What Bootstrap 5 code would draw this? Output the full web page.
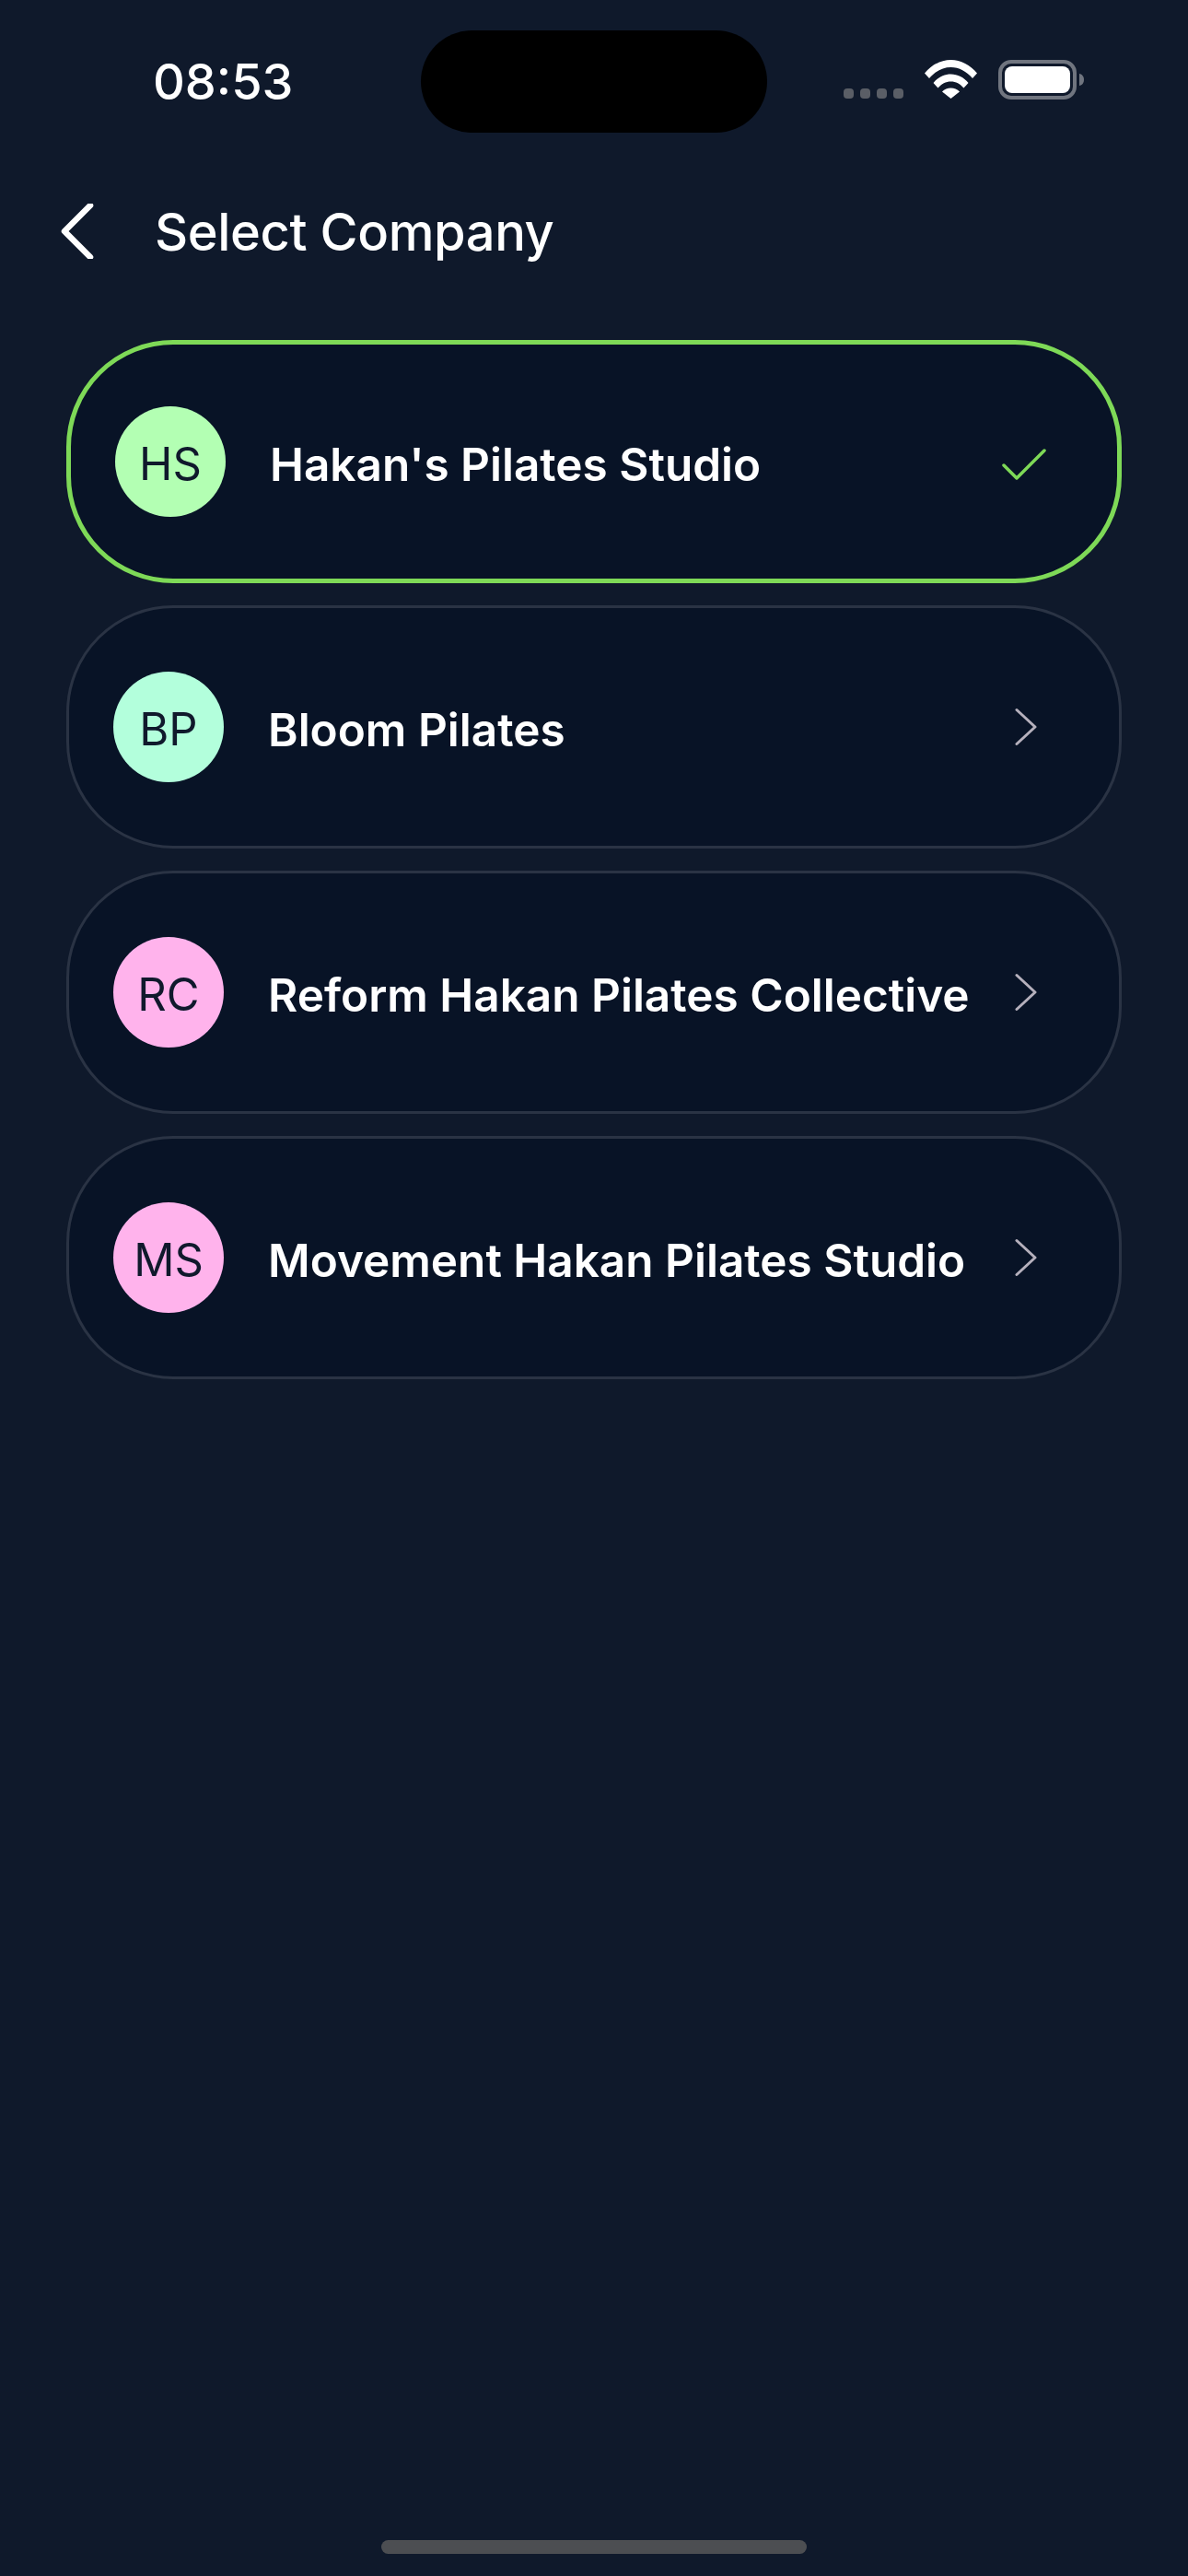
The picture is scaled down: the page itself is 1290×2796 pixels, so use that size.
<!DOCTYPE html>
<html lang="en">
<head>
    <meta charset="UTF-8">
    <meta name="viewport" content="width=device-width, initial-scale=1.0">
    <title>Select Company</title>
    <link href="https://cdn.jsdelivr.net/npm/bootstrap@5.3.3/dist/css/bootstrap.min.css" rel="stylesheet">
    <style>
        body {
            background: #0f192b;
            color: #fff;
            font-family: Inter, "Liberation Sans", sans-serif;
            min-height: 2796px;
        }
        .status-bar { height: 144px; padding: 33px 113px 0 166px; }
        .clock { font-size: 54px; font-weight: 500; line-height: 1; margin-top: 29px; width: 291px; }
        .island { width: 376px; height: 111px; background: #000; border-radius: 56px; }
        .status-icons { margin-left: 83px; margin-top: 32px; }
        .signal-dot { width: 11px; height: 11px; border-radius: 4px; background: #5a5e66; }
        .signal-dots { gap: 7px; margin-right: 23px; margin-top: 31px; }
        .wifi-icon { margin-right: 23px; }
        .top-row { padding: 77px 0 0 64px; height: 225px; }
        .back-btn { width: 40px; height: 60px; margin-right: 64px; }
        .page-title { font-size: 56px; font-weight: 500; letter-spacing: -.4px; margin: 3px 0 0; line-height: 1; }
        .company-list { padding: 0 72px; gap: 24px; }
        .company-row {
            height: 264px;
            background: #081326;
            border: 3px solid #2a3344;
            border-radius: 116px;
            padding: 0 0 0 48px;
            color: #fff;
            text-decoration: none;
        }
        .company-row.selected { border: 5px solid #7ed957; }
        .initials {
            width: 120px;
            height: 120px;
            font-size: 49px;
            padding-top: 5px;
            color: #10192c;
            flex-shrink: 0;
        }
        .tone-green { background: #b3ffb3; }
        .tone-mint { background: #b3ffdc; }
        .tone-pink { background: #ffb3ec; }
        .company-name { font-size: 49.500px; font-weight: 600; margin: 6px 0 0 48px; white-space: nowrap; }
        .row-icon { position: absolute; top: 50%; transform: translateY(-50%); }
        .row-chevron { right: 89px; }
        .row-check { right: 77px; margin-top: 3px; }
        .home-bar { width: 462px; height: 15px; background: #4c4e52; margin-bottom: 24px; }
    </style>
</head>
<body class="d-flex flex-column">
    <div class="status-bar d-flex align-items-start">
        <div class="clock">08:53</div>
        <div class="island"></div>
        <div class="status-icons d-flex align-items-start">
            <div class="signal-dots d-flex">
                <span class="signal-dot"></span><span class="signal-dot"></span><span class="signal-dot"></span><span class="signal-dot"></span>
            </div>
            <svg class="wifi-icon" width="57" height="42" viewBox="0 0 57 42">
                <path fill="#fff" d="M0 14.5C7.5 5.5 17.5 0 28.5 0S49.500 5.500 57 14.500L52 20C45.500 12.500 37.500 8 28.500 8S11.500 12.500 5 20Z"/>
                <path fill="#fff" d="M9.500 25C14.500 19 21 15.500 28.500 15.500S42.500 19 47.500 25L42.500 30.500C38.500 26 34 23.500 28.500 23.500S18.500 26 14.500 30.500Z"/>
                <path fill="#fff" d="M19 34.500C21.500 32 25 30.500 28.500 30.500S35.500 32 38 34.500L28.500 42Z"/>
            </svg>
            <svg width="93" height="43" viewBox="0 0 93 43">
                <rect x="2" y="2" width="81" height="39" rx="12" fill="none" stroke="#70757f" stroke-width="4"/>
                <rect x="7" y="7" width="71" height="29" rx="8" fill="#fff"/>
                <path fill="#70757f" d="M88 15c3 .5 5 3 5 6.500s-2 6-5 6.500z"/>
            </svg>
        </div>
    </div>

    <div class="top-row d-flex align-items-start">
        <a class="back-btn d-block" href="#" aria-label="Back">
            <svg width="40" height="60" viewBox="0 0 40 60">
                <path d="M34 3 6 31l28 28" transform="translate(0 -1)" fill="none" stroke="#fff" stroke-width="6.500" stroke-linecap="round" stroke-linejoin="round"/>
            </svg>
        </a>
        <h1 class="page-title">Select Company</h1>
    </div>

    <div class="company-list d-flex flex-column">
        <a href="#" class="company-row selected d-flex align-items-center position-relative">
            <span class="initials tone-green rounded-circle d-flex align-items-center justify-content-center">HS</span>
            <span class="company-name">Hakan's Pilates Studio</span>
            <svg class="row-icon row-check" width="48" height="34" viewBox="0 0 48 34">
                <path d="M2 18l14 14L46 2" fill="none" stroke="#7ed957" stroke-width="3.500" stroke-linecap="round" stroke-linejoin="round"/>
            </svg>
        </a>
        <a href="#" class="company-row d-flex align-items-center position-relative">
            <span class="initials tone-mint rounded-circle d-flex align-items-center justify-content-center">BP</span>
            <span class="company-name">Bloom Pilates</span>
            <svg class="row-icon row-chevron" width="24" height="41" viewBox="0 0 24 41">
                <path d="M2 2l20 18.500L2 39" fill="none" stroke="#b5b0bc" stroke-width="3" stroke-linecap="round" stroke-linejoin="round"/>
            </svg>
        </a>
        <a href="#" class="company-row d-flex align-items-center position-relative">
            <span class="initials tone-pink rounded-circle d-flex align-items-center justify-content-center">RC</span>
            <span class="company-name">Reform Hakan Pilates Collective</span>
            <svg class="row-icon row-chevron" width="24" height="41" viewBox="0 0 24 41">
                <path d="M2 2l20 18.500L2 39" fill="none" stroke="#b5b0bc" stroke-width="3" stroke-linecap="round" stroke-linejoin="round"/>
            </svg>
        </a>
        <a href="#" class="company-row d-flex align-items-center position-relative">
            <span class="initials tone-pink rounded-circle d-flex align-items-center justify-content-center">MS</span>
            <span class="company-name">Movement Hakan Pilates Studio</span>
            <svg class="row-icon row-chevron" width="24" height="41" viewBox="0 0 24 41">
                <path d="M2 2l20 18.500L2 39" fill="none" stroke="#b5b0bc" stroke-width="3" stroke-linecap="round" stroke-linejoin="round"/>
            </svg>
        </a>
    </div>

    <div class="home-bar rounded-pill mx-auto mt-auto"></div>

    <script src="https://cdn.jsdelivr.net/npm/bootstrap@5.3.3/dist/js/bootstrap.bundle.min.js"></script>
</body>
</html>
